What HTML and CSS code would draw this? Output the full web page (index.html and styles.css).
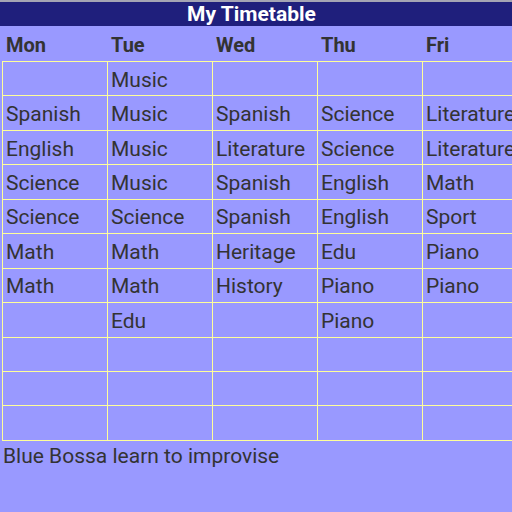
FILE: index.html
```html
<!DOCTYPE html>
<html>
<head>
<meta charset="utf-8">
<link rel="stylesheet" href="styles.css">
</head>
<body>
<div class="page">
  <div class="topline"></div>
  <div class="titlebar">My Timetable</div>
  <div class="days">
    <div class="day">Mon</div>
    <div class="day">Tue</div>
    <div class="day">Wed</div>
    <div class="day">Thu</div>
    <div class="day">Fri</div>
  </div>
  <div class="grid">
    <div class="cell"></div><div class="cell">Music</div><div class="cell"></div><div class="cell"></div><div class="cell"></div>
    <div class="cell">Spanish</div><div class="cell">Music</div><div class="cell">Spanish</div><div class="cell">Science</div><div class="cell">Literature</div>
    <div class="cell">English</div><div class="cell">Music</div><div class="cell">Literature</div><div class="cell">Science</div><div class="cell">Literature</div>
    <div class="cell">Science</div><div class="cell">Music</div><div class="cell">Spanish</div><div class="cell">English</div><div class="cell">Math</div>
    <div class="cell">Science</div><div class="cell">Science</div><div class="cell">Spanish</div><div class="cell">English</div><div class="cell">Sport</div>
    <div class="cell">Math</div><div class="cell">Math</div><div class="cell">Heritage</div><div class="cell">Edu</div><div class="cell">Piano</div>
    <div class="cell">Math</div><div class="cell">Math</div><div class="cell">History</div><div class="cell">Piano</div><div class="cell">Piano</div>
    <div class="cell"></div><div class="cell">Edu</div><div class="cell"></div><div class="cell">Piano</div><div class="cell"></div>
    <div class="cell"></div><div class="cell"></div><div class="cell"></div><div class="cell"></div><div class="cell"></div>
    <div class="cell"></div><div class="cell"></div><div class="cell"></div><div class="cell"></div><div class="cell"></div>
    <div class="cell"></div><div class="cell"></div><div class="cell"></div><div class="cell"></div><div class="cell"></div>
  </div>
  <div class="note">Blue Bossa learn to improvise</div>
</div>
</body>
</html>
```
FILE: styles.css
```css
html, body {
  margin: 0;
  padding: 0;
  background: #9999ff;
}
body {
  width: 512px;
  height: 512px;
  overflow: hidden;
  font-family: Roboto, "Noto Sans", sans-serif;
  color: #333333;
}
.page {
  width: 512px;
  height: 512px;
  overflow: hidden;
}
.topline {
  height: 2px;
  background: #a4a4b4;
}
.titlebar {
  height: 24px;
  background: #1f1f7c;
  color: #ffffff;
  font-weight: bold;
  font-size: 21px;
  line-height: 24px;
  text-align: center;
  padding-right: 9px;
}
.days {
  display: grid;
  grid-template-columns: repeat(5, 104px);
  column-gap: 1px;
  padding-left: 3px;
  height: 35px;
  width: 530px;
}
.day {
  font-size: 20px;
  font-weight: bold;
  padding-left: 3px;
  display: flex;
  align-items: center;
  padding-top: 2px;
}
.grid {
  display: grid;
  grid-template-columns: repeat(5, 104px);
  grid-auto-rows: 33.45px;
  gap: 1px;
  padding: 1px;
  margin-left: 2px;
  width: 524px;
  background: #ffff99;
}
.cell {
  background: #9999ff;
  font-size: 21px;
  padding-left: 3px;
  padding-top: 2px;
  display: flex;
  align-items: center;
  white-space: nowrap;
  overflow: hidden;
}
.note {
  font-size: 21px;
  padding-left: 3px;
  padding-top: 3px;
}
```
